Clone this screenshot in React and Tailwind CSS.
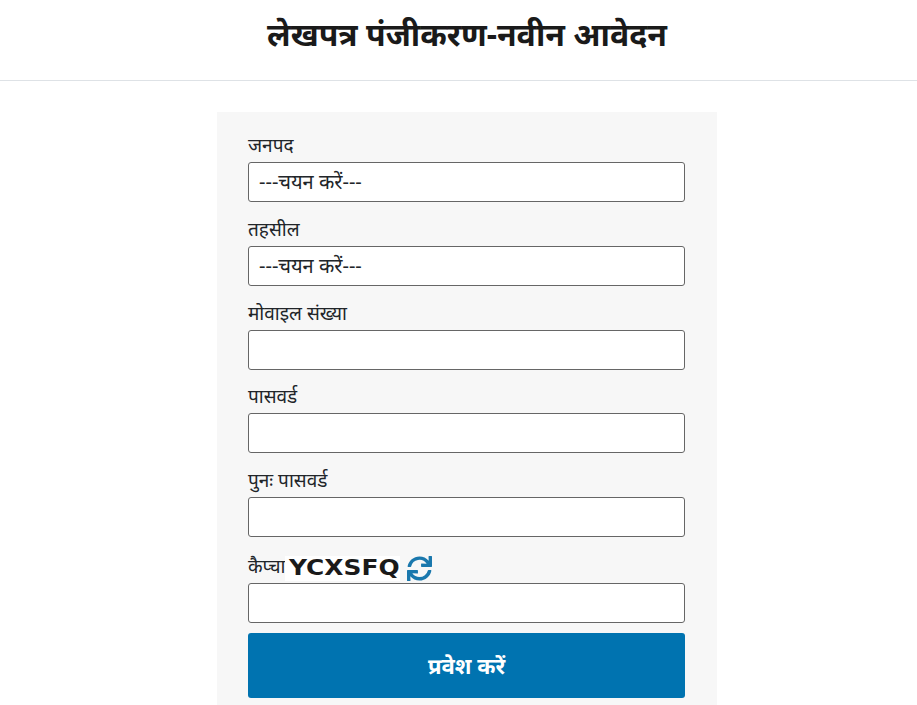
import React from "react";
import { FaSync } from "react-icons/fa";

function Field({ label, value, className = "" }) {
  return (
    <div className={className}>
      <label className="block h-[21px] text-[19px] leading-[23px] text-[#212529]">{label}</label>
      <div className="mt-[7px] flex h-10 w-full items-center rounded-[3px] border border-[#666] bg-white px-2.5 text-[20px] text-[#212529]">
        {value}
      </div>
    </div>
  );
}

export default function App() {
  return (
    <div className="h-[705px] overflow-hidden bg-white font-['Noto_Sans','Liberation_Sans',sans-serif]">
      <div className="w-[934px]">
        <header className="flex h-[81px] items-start justify-center border-b border-[#dee2e6] pt-[10px]">
          <h1 className="text-[32px] leading-[48px] font-bold text-[#1a1a1a]">लेखपत्र पंजीकरण-नवीन आवेदन</h1>
        </header>
        <main className="mx-auto mt-[31px] w-[500px] bg-[#f7f7f7] pt-[22px] pr-[32px] pb-6 pl-[31px]">
          <div className="flex flex-col gap-[16px]">
            <Field label="जनपद" value="---चयन करें---" />
            <Field label="तहसील" value="---चयन करें---" />
            <Field label="मोवाइल संख्या" />
            <Field label="पासवर्ड" className="-mt-px" />
            <Field label="पुनः पासवर्ड" />
            <div>
              <div className="flex h-[30px] items-center text-[19px] text-[#212529]">
                <span className="-mt-1 w-[37px] shrink-0">कैप्चा</span>
                <span className="flex h-[25px] w-[115px] items-center justify-start bg-white pl-[4px]">
                  <span className="inline-block origin-left scale-x-[1.13] font-['DejaVu_Sans',sans-serif] text-[22px] leading-none font-bold tracking-[0px] text-[#1a1a1a]">YCXSFQ</span>
                </span>
                <FaSync className="ml-[7px] text-[25px] text-[#1a78ad]" />
              </div>
              <div className="h-10 w-full rounded-[3px] border border-[#666] bg-white" />
              <button className="mt-[10px] flex h-[65px] w-full items-center justify-center rounded-[3px] bg-[#0073b0] text-[22px] font-bold text-white">प्रवेश करें</button>
            </div>
          </div>
        </main>
      </div>
    </div>
  );
}
